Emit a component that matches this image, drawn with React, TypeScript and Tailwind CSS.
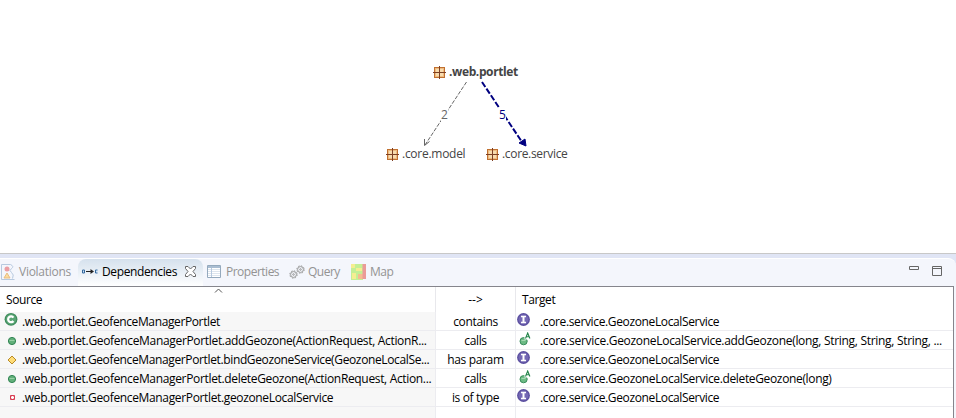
import React from "react";

const FONT = "font-['Open_Sans','Noto_Sans',sans-serif]";

function PackageIcon() {
  return (
    <svg width="13" height="13" viewBox="0 0 13 13" className="shrink-0">
      <rect x="1.5" y="1.5" width="10" height="10" fill="#eebb80" stroke="#c07030" />
      <path d="M3 3h3v3H3zM7 3h3v3H7zM3 7h3v3H3zM7 7h3v3H7z" fill="#f8dcae" />
      <path d="M6.5 0v13M0 6.5h13" stroke="#7d4024" />
    </svg>
  );
}

function ClassIcon() {
  return (
    <svg width="14" height="14" viewBox="0 0 14 14" className="-ml-px">
      <circle cx="7" cy="7.3" r="6.4" fill="#3f8c5c" />
      <circle cx="7" cy="7.3" r="5.2" fill="#5aa575" />
      <path d="M9.400 5.600A2.900 2.900 0 1 0 9.400 9" fill="none" stroke="#fff" strokeWidth="2.200" />
    </svg>
  );
}

function MethodIcon() {
  return (
    <svg width="14" height="14" viewBox="0 0 14 14" className="mt-[3px]">
      <circle cx="7" cy="7" r="3.6" fill="#62b07a" stroke="#2f8352" />
      <path d="M4.5 6.5h5" stroke="#98d0a5" />
    </svg>
  );
}

function ProtectedIcon() {
  return (
    <svg width="14" height="14" viewBox="0 0 14 14" className="mt-[3px]">
      <path d="M7 3l4 4-4 4-4-4z" fill="#ffdd78" stroke="#b98a25" />
    </svg>
  );
}

function FieldIcon() {
  return (
    <svg width="14" height="14" viewBox="0 0 14 14" className="mt-[3px]">
      <path d="M5.5 4.5h4v4h-4z" fill="#f3a5ae" stroke="#d63d51" />
      <path d="M7.5 5v3M6 6.5h3" stroke="#fff" />
    </svg>
  );
}

function InterfaceIcon() {
  return (
    <svg width="14" height="14" viewBox="0 0 14 14">
      <circle cx="6.5" cy="7.500" r="6.4" fill="#5c50a0" />
      <circle cx="6.5" cy="7.500" r="5" fill="#7468b4" />
      <path d="M4 4.500h5M4 10.500h5" stroke="#fff" strokeWidth="1.4" />
      <path d="M6.500 4v6.500" stroke="#fff" strokeWidth="2" />
    </svg>
  );
}

function AbstractIcon() {
  return (
    <svg width="14" height="14" viewBox="0 0 14 14" className="ml-px mt-px">
      <circle cx="5.600" cy="9.2" r="3.6" fill="#6dbb85" stroke="#3a8d5c" />
      <path d="M6.500 7.500V0H14v7.500z" fill="#fff" />
      <path d="M3.500 8.500h4" stroke="#a4d8b0" />
      <path d="M7.500 6.500L9.700 1l2.200 5.500M8.400 4.700h2.700" fill="none" stroke="#238449" strokeWidth="1.100" />
    </svg>
  );
}

type Row = {
  icon: React.ReactNode;
  source: string;
  sourceTrack: string;
  kind: string;
  targetIcon: React.ReactNode;
  target: string;
  targetTrack: string;
};

const rows: Row[] = [
  { icon: <ClassIcon />, source: ".web.portlet.GeofenceManagerPortlet", sourceTrack: "tracking-[-0.380px]", kind: "contains", targetIcon: <InterfaceIcon />, target: ".core.service.GeozoneLocalService", targetTrack: "tracking-[-0.365px]" },
  { icon: <MethodIcon />, source: ".web.portlet.GeofenceManagerPortlet.addGeozone(ActionRequest, ActionR...", sourceTrack: "tracking-[-0.325px]", kind: "calls", targetIcon: <AbstractIcon />, target: ".core.service.GeozoneLocalService.addGeozone(long, String, String, String, ...", targetTrack: "tracking-[-0.3px]" },
  { icon: <ProtectedIcon />, source: ".web.portlet.GeofenceManagerPortlet.bindGeozoneService(GeozoneLocalSe...", sourceTrack: "tracking-[-0.365px]", kind: "has param", targetIcon: <InterfaceIcon />, target: ".core.service.GeozoneLocalService", targetTrack: "tracking-[-0.365px]" },
  { icon: <MethodIcon />, source: ".web.portlet.GeofenceManagerPortlet.deleteGeozone(ActionRequest, Action...", sourceTrack: "tracking-[-0.335px]", kind: "calls", targetIcon: <AbstractIcon />, target: ".core.service.GeozoneLocalService.deleteGeozone(long)", targetTrack: "tracking-[-0.350px]" },
  { icon: <FieldIcon />, source: ".web.portlet.GeofenceManagerPortlet.geozoneLocalService", sourceTrack: "tracking-[-0.350px]", kind: "is of type", targetIcon: <InterfaceIcon />, target: ".core.service.GeozoneLocalService", targetTrack: "tracking-[-0.365px]" },
];

function Graph() {
  return (
    <div className="relative h-[253px] bg-white text-[#444]">
      <svg className="absolute inset-0" width="956" height="253">
        <path d="M466.500 82L425 145" stroke="#666" strokeDasharray="4 1.500" fill="none" />
        <path d="M424.500 139v6.500l5-4" stroke="#666" fill="none" />
        <path d="M482 82L522 142" stroke="#000080" strokeWidth="2" strokeDasharray="6 2" fill="none" />
        <path d="M519 143l6-4 1 7z" fill="#000080" stroke="#000080" />
      </svg>
      <div className="absolute left-[433px] top-[64px] flex h-4 items-center gap-[3px] font-bold leading-4"><PackageIcon /><span className="tracking-[-0.380px]">.web.portlet</span></div>
      <div className="absolute left-[386px] top-[146px] flex h-4 items-center gap-[3px] leading-4"><PackageIcon /><span className="tracking-[-0.270px]">.core.model</span></div>
      <div className="absolute left-[486px] top-[146px] flex h-4 items-center gap-[3px] leading-4"><PackageIcon /><span className="tracking-[-0.330px]">.core.service</span></div>
      <span className="absolute left-[441px] top-[108px] bg-white leading-[13px] text-[#666]">2</span>
      <span className="absolute left-[499px] top-[108px] bg-white leading-[13px] text-[#000080]">5</span>
    </div>
  );
}

export default function App() {
  return (
    <div className={`h-[418px] w-[956px] overflow-hidden whitespace-nowrap bg-white text-[12px] ${FONT}`}>
      <Graph />
      <div className="h-[165px] bg-[#e0e5f5]">
        <div className="h-px bg-[#c8c8c8]" />
        <div className="h-1" />
        <div className="flex h-[28px] rounded-tr-lg border-t border-white bg-[#f4f6fc] text-[#939393]">
          <div className="flex w-[78px] items-center gap-[4px] pb-[2px] pl-px">
            <svg width="14" height="16" viewBox="0 0 14 16"><path d="M.5.500h9M.5 15.500h13M.5.500v15M9.500.500q4 2 1 4t0 4 1 6" fill="none" stroke="#b7c9df" /><circle cx="6" cy="5" r="2.500" fill="#eb9da3" /><path d="M6 9l3 5H3z" fill="#fbdc9e" stroke="#e9bd81" /></svg>
            <span className="tracking-[-0.270px]">Violations</span>
          </div>
          <div className="flex w-[125px] items-center rounded-t-lg bg-linear-to-b from-[#d5e1ed] to-white pb-[2px] pl-[4px] text-black">
            <svg width="16" height="7" viewBox="0 0 16 7"><path d="M.5 2h2v3h-2zM15.500 2h-2v3h2" fill="#cce0f5" stroke="#356a9f" /><path d="M4 3.500h7" stroke="#222" /><path d="M8.500 1L12 3.500 8.500 6z" fill="#222" /></svg>
            <span className="ml-[4px] tracking-[-0.380px]">Dependencies</span>
            <svg className="ml-[8px]" width="11" height="11" viewBox="0 0 11 11"><path d="M.5.500h2.500l2.500 2.500L8 .500h2.500v2L8 5.500l2.500 3v2H8L5.500 8 3 10.500H.500v-2L3 5.500l-2.500-3z" fill="#fff" stroke="#666" /></svg>
          </div>
          <div className="flex w-[82px] items-center gap-[5px] pb-[2px] pl-[4px]">
            <svg width="14" height="13" viewBox="0 0 14 13"><path d="M.5.500h13v12H.500z" fill="#fff" stroke="#94a9bd" /><path d="M1 2h12" stroke="#a9bdd2" strokeWidth="2" /><path d="M1 4.500h12M1 6.500h12M1 8.500h12M1 10.500h12" stroke="#dde5ee" /><path d="M4.500 3v9" stroke="#b7c9df" /></svg>
            <span className="tracking-[-0.5px]">Properties</span>
          </div>
          <div className="flex w-[64px] items-center gap-[3px] pb-[2px] pl-[4px]">
            <svg width="16" height="14" viewBox="0 0 16 14" fill="none" stroke="#999"><circle cx="4.500" cy="9.500" r="2.900" /><circle cx="4.500" cy="9.500" r="3.700" strokeDasharray="1.500 1.400" /><circle cx="4.500" cy="9.500" r=".8" /><circle cx="11.500" cy="4.500" r="2.900" /><circle cx="11.500" cy="4.500" r="3.700" strokeDasharray="1.500 1.400" /><circle cx="11.500" cy="4.500" r=".8" /></svg>
            <span className="tracking-[-0.5px]">Query</span>
          </div>
          <div className="flex items-center gap-[4px] pb-[2px] pl-[2px]">
            <svg width="15" height="16" viewBox="0 0 15 16"><path d="M0 0h12v16H0z" fill="#c4ef95" /><path d="M0 0h4v4H0zM5 4h6v3H5zM1 9h4v6H1z" fill="#f5ee91" /><path d="M7 10h5v5H7z" fill="#f5bd91" /><path d="M11.500 0H15v15h-3.500z" fill="#eb9b98" /></svg>
            <span className="tracking-[-0.5px]">Map</span>
          </div>
          <svg className="ml-auto mr-[13px] mt-[7px]" width="34" height="12" viewBox="0 0 34 12" fill="none" stroke="#666"><path d="M.5.500h9v3h-9zM23.500.500h9v9h-9zM23 2.500h10" /></svg>
        </div>
        <div className="flex h-[132px] flex-col bg-[#f4f6fc] pr-[2px]">
          <div className="flex grow flex-col border-r border-t border-[#85858c] bg-white text-black">
            <div className="flex h-[25px] items-center">
              <div className="relative flex h-full w-[436px] items-center border-r border-[#e8e8ec] pl-[6px] tracking-[-0.4px]">Source
                <svg className="absolute left-[214px] top-[1px]" width="9" height="6"><path d="M1 4.500L4.500 1 8 4.500" fill="none" stroke="#555" /></svg>
              </div>
              <div className="flex h-full w-[80px] items-center justify-center border-r border-[#e8e8ec]">--&gt;</div>
              <div className="pl-[6px] tracking-[-0.4px]">Target</div>
            </div>
            {rows.map((r, i) => (
              <div key={i} className="flex h-[19px] leading-[20px]">
                <div className="flex w-[436px] border-b border-r border-[#ececf0] bg-[#f7f7f7] pl-[5px]">
                  <span className="w-[17px] shrink-0">{r.icon}</span><span className={r.sourceTrack}>{r.source}</span>
                </div>
                <div className="w-[80px] border-b border-r border-[#ececf0] text-center tracking-[-0.350px]">{r.kind}</div>
                <div className="flex grow border-b border-[#ececf0] pl-[1px]"><span className="w-[23px] shrink-0">{r.targetIcon}</span><span className={r.targetTrack}>{r.target}</span></div>
              </div>
            ))}
            <div className="flex grow"><div className="w-[436px] border-r border-[#ececf0] bg-[#f7f7f7]" /><div className="w-[80px] border-r border-[#ececf0]" /></div>
          </div>
        </div>
      </div>
    </div>
  );
}
